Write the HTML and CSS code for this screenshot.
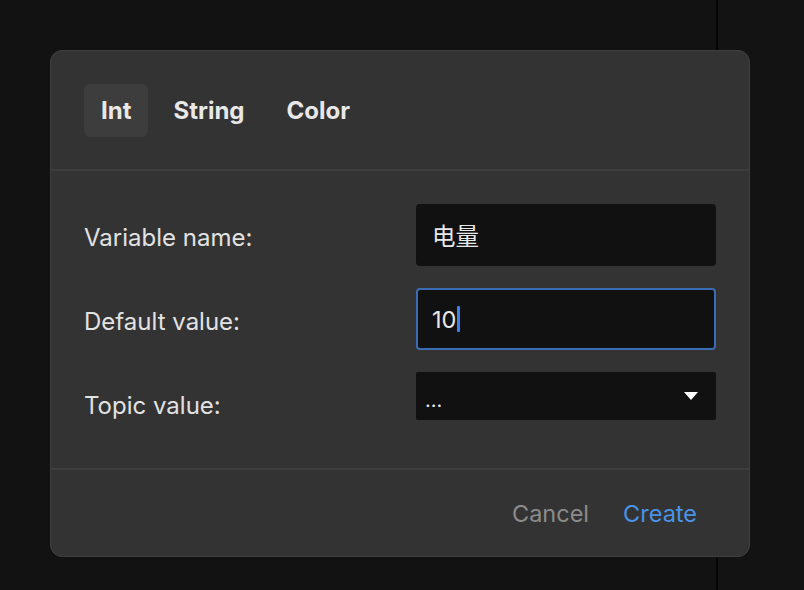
FILE: index.html
```html
<!DOCTYPE html>
<html>
<head>
<meta charset="utf-8">
<link rel="stylesheet" href="styles.css">
</head>
<body>
<div class="app">
  <div class="main"></div>
  <div class="side"></div>
</div>
<div class="dialog">
  <div class="tabs">
    <div class="tab active">Int</div>
    <div class="tab">String</div>
    <div class="tab">Color</div>
  </div>
  <div class="form">
    <div class="row">
      <label class="label">Variable name:</label>
      <div class="field">电量</div>
    </div>
    <div class="row">
      <label class="label">Default value:</label>
      <div class="field focus">10<span class="caret"></span></div>
    </div>
    <div class="row">
      <label class="label">Topic value:</label>
      <div class="field select"><span class="dots">...</span>
        <svg class="arrow" width="14" height="8" viewBox="0 0 14 8"><path d="M0 0 H14 L7 8 Z" fill="#fff"/></svg>
      </div>
    </div>
  </div>
  <div class="footer">
    <span class="btn cancel">Cancel</span>
    <span class="btn create">Create</span>
  </div>
</div>
</body>
</html>
```
FILE: styles.css
```css
html, body {
  margin: 0;
  padding: 0;
  height: 100%;
  background: #121212;
  font-family: Inter, "Noto Sans CJK SC", sans-serif;
  overflow: hidden;
}
.app {
  display: flex;
  height: 100%;
}
.main {
  width: 716px;
  background: #121212;
}
.side {
  flex: 1;
  border-left: 2px solid #050505;
  background: #131313;
}
.dialog {
  position: absolute;
  left: 50px;
  top: 50px;
  width: 698px;
  height: 505px;
  background: #333333;
  border: 1px solid #3f3f3f;
  border-radius: 12px;
  display: flex;
  flex-direction: column;
}
.tabs {
  display: flex;
  gap: 8px;
  padding: 33px 33px 32px;
  border-bottom: 2px solid #3e3e3e;
}
.tab {
  height: 53px;
  padding: 0 17px;
  display: flex;
  align-items: center;
  font-size: 24px;
  font-weight: 700;
  color: #e8e8e8;
  border-radius: 6px;
}
.tab.active {
  background: #3d3d3d;
}
.form {
  flex: 1;
  padding: 33px 33px 0;
  display: flex;
  flex-direction: column;
  gap: 22px;
}
.row {
  display: flex;
  align-items: flex-start;
  justify-content: space-between;
  height: 62px;
}
.label {
  font-size: 24px;
  line-height: 28px;
  padding-top: 20px;
  color: #e2e2e2;
}
.field {
  width: 300px;
  height: 62px;
  box-sizing: border-box;
  background: #111111;
  border-radius: 4px;
  padding: 0 16px;
  display: flex;
  align-items: center;
  font-size: 23.5px;
  color: #e8e8e8;
}
.field.focus {
  border: 2px solid #3a6db5;
  padding: 0 14px;
  height: 62px;
}
.caret {
  display: inline-block;
  width: 3px;
  height: 26px;
  background: #3b82f0;
  border-radius: 1px;
  margin-left: 1px;
}
.field.select {
  height: 48px;
  border-radius: 2px;
  padding: 0 18px 0 9px;
  justify-content: space-between;
}
.dots {
  font-size: 20px;
  line-height: 1;
  margin-top: 8px;
}
.footer {
  height: 88px;
  border-top: 2px solid #3e3e3e;
  box-sizing: border-box;
  display: flex;
  align-items: center;
  justify-content: flex-end;
  gap: 34px;
  padding: 0 52px 0 0;
}
.btn {
  font-size: 23.5px;
}
.cancel { color: #8c8c8c; }
.create { color: #4a93e8; }
```
